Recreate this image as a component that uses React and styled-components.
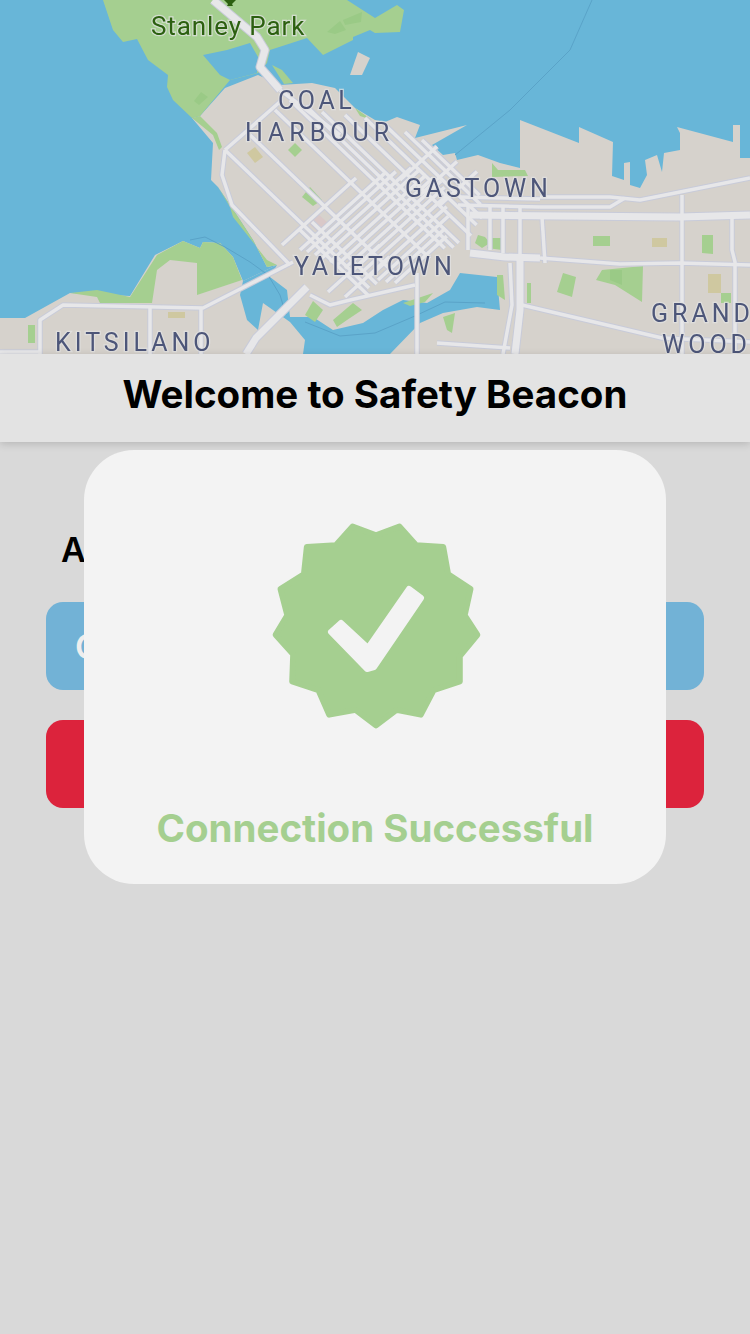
import { createGlobalStyle, styled } from "styled-components";

const GlobalStyle = createGlobalStyle`
  html, body {
    margin: 0;
    padding: 0;
    background: #d9d9d9;
    font-family: Inter, "Liberation Sans", sans-serif;
  }
`;

const WATER = "#68b6d8";
const LAND = "#d6d2cc";
const GREEN = "#a5cf90";
const TAN = "#cfc8a0";

const LAND_SHAPE =
  "0,318 25,318 70,293 130,296 155,255 183,241 200,248 203,242 220,243 233,257 243,281 277,265 267,267 253,240 240,220 218,187 211,180 213,143 192,118 200,116 225,88 258,75 280,85 312,83 335,88 355,108 375,120 385,122 397,117 420,125 415,138 467,125 432,145 443,155 455,153 457,160 478,155 500,163 520,168 520,120 579,143 579,127 613,142 612,176 624,180 624,163 630,162 630,185 640,188 647,175 645,160 657,155 662,172 664,153 680,150 680,133 677,127 733,142 733,125 740,125 740,158 750,158 750,354 0,354";

const CREEK_SHAPE =
  "243,281 277,265 270,277 287,290 290,317 313,317 333,330 363,323 383,310 403,300 427,303 450,290 460,273 497,277 500,310 477,307 443,313 420,323 390,354 303,354 305,340 290,322 263,303 258,330 247,320 240,295";

const GREEN_SHAPES = [
  "103,0 347,0 375,18 397,5 404,10 400,32 375,33 370,30 353,37 353,40 323,55 307,38 270,50 267,63 258,73 230,80 200,116 192,118 173,100 167,87 168,75 148,60 137,39 123,42 113,30",
  "200,116 217,133 222,147 219,150 213,135 192,118",
  "218,187 230,207 233,217 267,260 277,265 267,267 253,240 240,220",
  "272,65 282,70 293,83 284,84",
  "355,108 365,115 372,120 360,116",
  "157,255 183,241 200,248 203,242 220,243 233,257 242,280 197,295 197,263 170,260 157,270 152,303 100,303 97,297 70,293 97,290 130,297",
  "305,315 313,301 323,310 315,322",
  "333,320 353,303 362,310 347,320 337,327",
  "492,163 498,170 525,170 528,176 492,177",
  "475,243 478,235 485,237 490,243 482,248",
  "487,248 492,238 502,238 502,250",
  "497,275 503,275 505,300 497,295",
  "527,283 531,283 531,303 527,303",
  "443,317 455,313 452,333 447,330",
  "557,292 563,273 576,277 572,297",
  "596,280 602,270 643,266 642,302 615,285",
  "288,150 295,143 302,150 295,157",
  "302,197 310,187 322,200 313,206",
  "593,236 610,236 610,246 593,246",
  "702,235 713,235 713,254 702,253",
  "721,293 731,293 731,303 721,303",
  "28,325 35,325 35,343 28,343",
  "403,303 433,293 425,302 410,306",
];

const DARK_GREEN_SHAPES = [
  "327,32 340,21 346,30 335,34",
  "343,20 362,12 361,22 345,25",
  "194,101 201,92 208,97 199,105",
  "610,270 622,270 622,285 610,280",
];

const TAN_SHAPES = [
  "247,153 255,147 263,157 255,163",
  "652,238 667,238 667,247 652,247",
  "708,274 721,274 721,293 708,293",
  "168,312 185,312 185,318 168,318",
];

const WIDE_ROADS = [
  "213,0 257,37 265,50 260,67 280,90",
  "246,354 256,338 307,287",
  "470,253 505,257 540,258",
  "520,255 520,310 515,354",
  "470,215 560,216 680,217 750,215",
];

const ROADS = [
  "0,352 40,352",
  "40,354 40,320 63,305 203,308 293,262",
  "150,308 150,354",
  "201,309 201,354",
  "225,150 222,175 232,205 290,265",
  "225,150 282,100",
  "280,90 340,135",
  "540,197 610,197 640,200 680,192 750,178",
  "540,207 610,207 625,198",
  "460,197 540,199",
  "458,205 540,207",
  "540,258 620,264 680,263 750,265",
  "682,195 682,354",
  "732,217 732,250 735,262 735,354",
  "542,217 545,263",
  "468,205 468,250",
  "490,205 490,250",
  "503,205 503,253",
  "520,205 520,255",
  "510,263 512,305 503,354",
  "417,273 417,354",
  "522,305 662,338 750,342",
  "437,343 510,348",
  "310,295 330,305 350,300 415,285",
];

// street blocks run in two diagonals across downtown: [x, y, length]
const NE_STREETS = [
  [282, 245, 100],
  [300, 250, 115],
  [307, 252, 120],
  [315, 255, 130],
  [322, 258, 130],
  [330, 262, 130],
  [337, 265, 130],
  [345, 268, 130],
  [352, 271, 125],
  [360, 274, 118],
  [369, 277, 105],
  [378, 280, 95],
  [386, 282, 80],
  [395, 283, 70],
  [328, 292, 70],
  [345, 297, 60],
  [400, 180, 50],
  [420, 195, 50],
  [440, 205, 50],
];

const SE_STREETS = [
  [225, 150, 200],
  [250, 135, 205],
  [275, 110, 215],
  [290, 100, 215],
  [306, 106, 205],
  [322, 112, 190],
  [345, 115, 175],
  [365, 118, 155],
  [385, 125, 135],
  [405, 132, 105],
  [422, 140, 80],
  [300, 230, 95],
  [312, 222, 90],
];

const toLine = (x, y, len, dx, dy) =>
  `${x},${y} ${(x + len * dx).toFixed(1)},${(y + len * dy).toFixed(1)}`;

const STREETS = [
  ...NE_STREETS.map(([x, y, len]) => toLine(x, y, len, 0.74, -0.67)),
  ...SE_STREETS.map(([x, y, len]) => toLine(x, y, len, 0.72, 0.69)),
];

const CREEK_LINES = [
  "190,240 205,237 225,247 250,262 268,275 280,295 286,315",
  "305,322 340,336 375,333 415,316 445,302 485,303",
];

const MapPane = styled.svg`
  display: block;
  width: 750px;
  height: 354px;
  filter: blur(0.5px);
`;

const MapLabel = styled.text`
  font-family: Roboto, "Liberation Sans", sans-serif;
  font-size: ${(p) => p.$size || 25}px;
  letter-spacing: ${(p) => p.$spacing ?? 4}px;
  fill: ${(p) => p.$color || "#4d5679"};
  stroke: rgba(225, 225, 225, 0.75);
  stroke-width: 2.5px;
  paint-order: stroke;
`;

const Page = styled.div`
  position: relative;
  width: 750px;
  height: 1334px;
  overflow: hidden;
  background: #d9d9d9;
`;

const Header = styled.header`
  position: relative;
  height: 88px;
  box-sizing: border-box;
  padding-bottom: 8px;
  display: flex;
  align-items: center;
  justify-content: center;
  background: #e3e3e3;
  box-shadow: 0 2px 8px rgba(0, 0, 0, 0.16);
`;

const Title = styled.h1`
  margin: 0;
  font-size: 38.5px;
  font-weight: 700;
  color: #000;
`;

const Body = styled.main`
  display: flex;
  flex-direction: column;
  gap: 30px;
  padding: 85px 46px 0;
`;

const Prompt = styled.p`
  margin: 0 0 0 15px;
  font-size: 34px;
  line-height: 45px;
  font-weight: 600;
  color: #000;
`;

const ActionButton = styled.button`
  height: 88px;
  padding: 0 29px;
  border: 0;
  border-radius: 17px;
  background: ${(p) => p.$color};
  color: #eeeeee;
  font-family: inherit;
  font-size: 34px;
  font-weight: 600;
  text-align: left;
`;

const Modal = styled.section`
  position: absolute;
  left: 84px;
  top: 450px;
  width: 582px;
  height: 434px;
  box-sizing: border-box;
  padding-top: 50px;
  display: flex;
  flex-direction: column;
  align-items: center;
  border-radius: 50px;
  background: #f3f3f3;
`;

const Badge = styled.svg`
  display: block;
  width: 250px;
  height: 250px;
`;

const ModalText = styled.p`
  margin: 53px 0 0;
  font-size: 38.5px;
  line-height: 50px;
  font-weight: 700;
  color: ${GREEN};
`;

function CityMap() {
  const roadLayer = (color, grow) => (
    <g fill="none" stroke={color} strokeLinejoin="round">
      <g strokeWidth={3.5 + grow}>
        {[...ROADS, ...STREETS].map((points) => (
          <polyline key={points} points={points} />
        ))}
      </g>
      <g strokeWidth={7 + grow}>
        {WIDE_ROADS.map((points) => (
          <polyline key={points} points={points} />
        ))}
      </g>
    </g>
  );

  return (
    <MapPane viewBox="0 0 750 354">
      <rect width="750" height="354" fill={WATER} />
      <polygon points={LAND_SHAPE} fill={LAND} />
      <polygon points="350,75 358,52 370,58 362,75" fill={LAND} />
      <polygon points={CREEK_SHAPE} fill={WATER} />
      {GREEN_SHAPES.map((points) => (
        <polygon key={points} points={points} fill={GREEN} />
      ))}
      {DARK_GREEN_SHAPES.map((points) => (
        <polygon key={points} points={points} fill="#9aca86" />
      ))}
      <polygon points="203,55 220,75 230,80 257,73 258,57 250,43 227,50" fill={WATER} />
      <polygon points="308,223 317,213 328,223 318,232" fill="#d9c8c8" />
      {TAN_SHAPES.map((points) => (
        <polygon key={points} points={points} fill={TAN} />
      ))}
      <g fill="none" stroke="#5aa3c8" strokeWidth="1">
        <polyline points="592,0 570,50 510,110 455,155" />
        {CREEK_LINES.map((points) => (
          <polyline key={points} points={points} />
        ))}
      </g>
      {roadLayer("#c8cbd9", 2)}
      {roadLayer("#e7e7e9", 0)}
      <polygon points="224,0 236,0 232,4 233,6 227,6 228,4" fill="#2c6010" />

      <MapLabel x="151" y="35" $size={26} $spacing={0.9} $color="#2c6010">
        Stanley Park
      </MapLabel>
      <MapLabel x="278" y="109" $spacing={3.6}>COAL</MapLabel>
      <MapLabel x="245" y="141" $spacing={5}>HARBOUR</MapLabel>
      <MapLabel x="405" y="197" $spacing={3.8}>GASTOWN</MapLabel>
      <MapLabel x="294" y="275">YALETOWN</MapLabel>
      <MapLabel x="55" y="351">KITSILANO</MapLabel>
      <MapLabel x="651" y="322">GRAND</MapLabel>
      <MapLabel x="662" y="353">WOOD</MapLabel>
    </MapPane>
  );
}

function SuccessBadge() {
  return (
    <Badge viewBox="0 0 250 250">
      <polygon
        transform="translate(126 126) scale(0.975) translate(-126 -126)"
        points="126,33 150,24 167,43 195,45 200,73 223,88 217,115 230,135 212,157 212,183 185,192 172,217 147,212 126,228 105,212 78,217 67,192 40,183 41,155 23,135 35,115 28,88 52,73 55,45 85,43 102,24"
        fill={GREEN}
        stroke={GREEN}
        strokeWidth="6"
        strokeLinejoin="round"
      />
      <polygon
        points="81,132 91,123 118,148 159,89 171,98 124,167 117,169"
        fill="#f3f3f3"
        stroke="#f3f3f3"
        strokeWidth="6"
        strokeLinejoin="round"
      />
    </Badge>
  );
}

export default function App() {
  return (
    <Page>
      <GlobalStyle />
      <CityMap />
      <Header>
        <Title>Welcome to Safety Beacon</Title>
      </Header>
      <Body>
        <Prompt>A</Prompt>
        <ActionButton $color="#72b2d6">C</ActionButton>
        <ActionButton $color="#dc233c" />
      </Body>
      <Modal>
        <SuccessBadge />
        <ModalText>Connection Successful</ModalText>
      </Modal>
    </Page>
  );
}
